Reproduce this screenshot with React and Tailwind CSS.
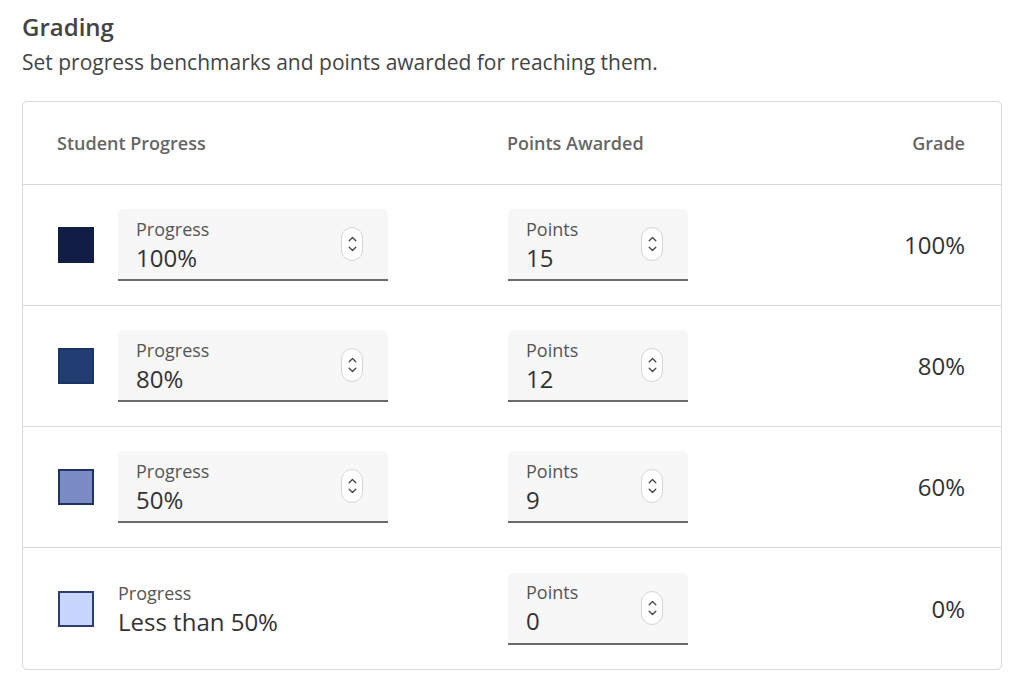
import React from 'react';

const ROWS = [
  { swatch: 'bg-[#111d44] border-[#111d44]', progress: '100%', points: '15', grade: '100%', editable: true },
  { swatch: 'bg-[#223d72] border-[#1c3367]', progress: '80%', points: '12', grade: '80%', editable: true },
  { swatch: 'bg-[#7a8bc6] border-[#1e3266]', progress: '50%', points: '9', grade: '60%', editable: true },
  { swatch: 'bg-[#c8d6ff] border-[#2b3f70]', progress: 'Less than 50%', points: '0', grade: '0%', editable: false },
];

const Stepper = () => (
  <div className="w-[22px] h-[34px] rounded-full border border-[#d6d6d6] bg-white flex flex-col items-center justify-center gap-[4px]">
    <svg width="9" height="6" viewBox="0 0 9 6" fill="none">
      <path d="M1.2 4.8L4.5 1.5L7.8 4.8" stroke="#444" strokeWidth="1.3" strokeLinecap="round" strokeLinejoin="round" />
    </svg>
    <svg width="9" height="6" viewBox="0 0 9 6" fill="none">
      <path d="M1.2 1.2L4.5 4.5L7.8 1.2" stroke="#444" strokeWidth="1.3" strokeLinecap="round" strokeLinejoin="round" />
    </svg>
  </div>
);

// filled number field with label on top and a small up/down pill
const NumberField = ({ label, value, width }) => (
  <div className={`${width} h-[72px] bg-[#f7f7f7] rounded-t-[5px] border-b-2 border-[#6b6b6b] flex items-center pl-[18px] pr-[25px]`}>
    <div className="flex-1 flex flex-col pt-[1px]">
      <span className="text-[18px] leading-6 text-[#555]">{label}</span>
      <span className="mt-[2px] text-[24px] leading-[30px] text-[#333]">{value}</span>
    </div>
    <Stepper />
  </div>
);

export default function App() {
  return (
    <div className="bg-white min-h-[690px] px-[22px] pt-[11px] text-[#444]" style={{ fontFamily: '"Open Sans", "Noto Sans", sans-serif' }}>
      <h2 className="text-[24px] leading-8 font-semibold text-[#444]">Grading</h2>
      <p className="mt-[4px] text-[21px] leading-[30px] text-[#444]">Set progress benchmarks and points awarded for reaching them.</p>

      <div className="mt-[24px] w-[980px] border border-[#d9d9d9] rounded-[5px]">
        <div className="h-[83px] flex items-center pl-[34px] pr-[36px] text-[18px] font-semibold text-[#666] border-b border-[#d9d9d9]">
          <span className="w-[450px]">Student Progress</span>
          <span className="w-[180px]">Points Awarded</span>
          <span className="flex-1 text-right">Grade</span>
        </div>

        {ROWS.map((row, i) => (
          <div
            key={i}
            className={`h-[121px] flex items-center pl-[35px] pr-[36px] ${i < ROWS.length - 1 ? 'border-b border-[#d9d9d9]' : ''}`}
          >
            <div className="w-[450px] flex items-center">
              <div className={`w-9 h-9 border-2 ${row.swatch}`} />
              {row.editable ? (
                <div className="ml-[24px]">
                  <NumberField label="Progress" value={row.progress} width="w-[270px]" />
                </div>
              ) : (
                <div className="ml-[24px] flex flex-col pt-[1px]">
                  <span className="text-[18px] leading-6 text-[#555]">Progress</span>
                  <span className="mt-[2px] text-[24px] leading-[30px] text-[#333]">{row.progress}</span>
                </div>
              )}
            </div>
            <NumberField label="Points" value={row.points} width="w-[180px]" />
            <span className="flex-1 text-right text-[24px] text-[#333]">{row.grade}</span>
          </div>
        ))}
      </div>
    </div>
  );
}
